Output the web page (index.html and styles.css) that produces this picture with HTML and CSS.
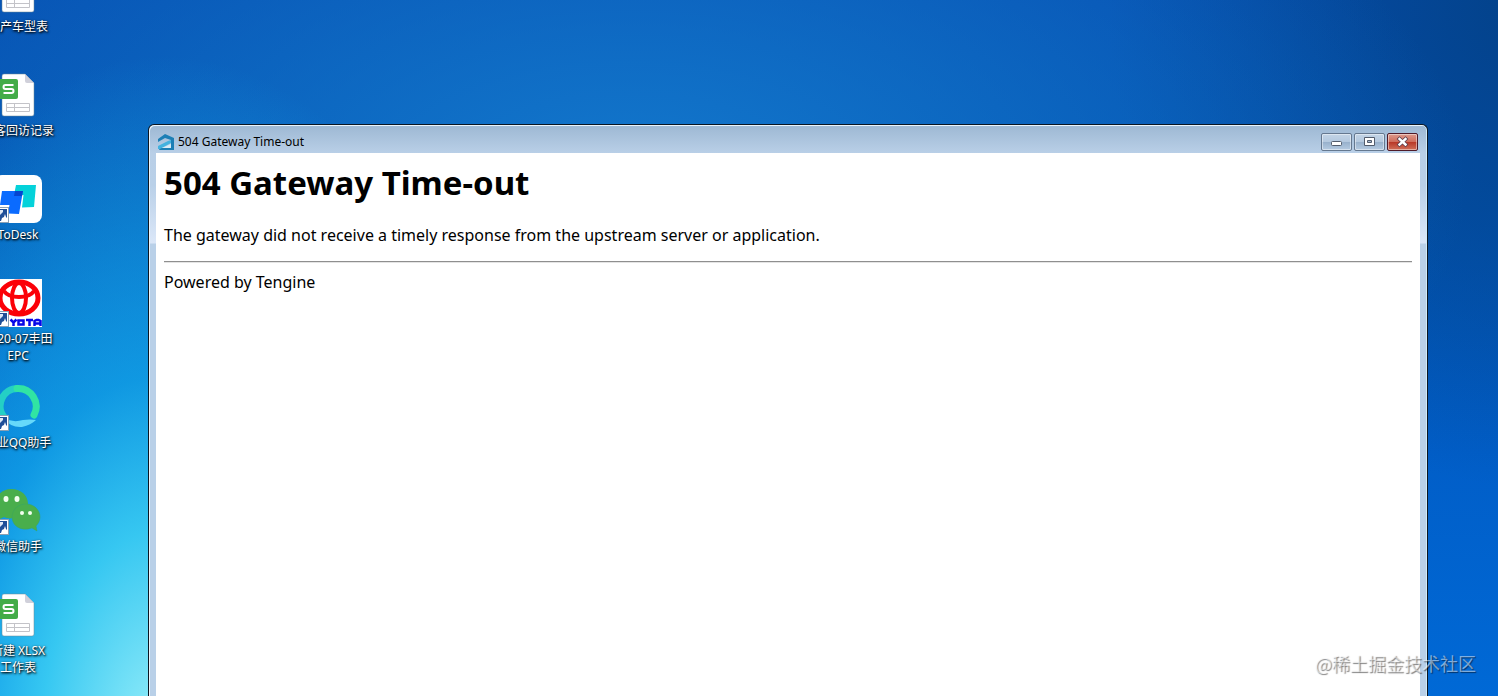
FILE: index.html
```html
<!DOCTYPE html>
<html lang="zh-CN">
<head>
    <meta charset="UTF-8">
    <meta name="viewport" content="width=device-width, initial-scale=1.0">
    <title>504 Gateway Time-out</title>
    <link rel="stylesheet" href="styles.css">
</head>
<body>
    <!-- shared icon shapes -->
    <svg class="defs" width="0" height="0" aria-hidden="true">
        <symbol id="sheet" viewBox="0 0 48 48">
            <path d="M10 3h21l9 9v31a2 2 0 0 1-2 2H10a2 2 0 0 1-2-2V5a2 2 0 0 1 2-2z" fill="#fff" stroke="#6b8796" stroke-opacity=".5" stroke-width="1"/>
            <path d="M31 3l9 9h-7a2 2 0 0 1-2-2z" fill="#d0d0da"/>
            <path d="M12.500 32.500h23v8h-23zM12.500 36.500h23M20.500 32.500v8" fill="none" stroke="#c3c3c8"/>
            <rect x="4" y="8" width="20" height="20" rx="2" fill="#43ac48"/>
            <path d="M19.500 14h-8q-2 0-2 2t2 2h6q2 0 2 2t-2 2h-8" fill="none" stroke="#fff" stroke-width="2"/>
        </symbol>
        <symbol id="shortcut" viewBox="0 0 48 48">
            <rect x=".5" y="32.500" width="14" height="15" fill="#fff" stroke="#8aa0b4"/>
            <rect x="2" y="34" width="11" height="12" fill="#1f4f98"/>
            <path d="M5 35h4v2l-3 3z" fill="#dfe9f5"/>
            <path d="M7 46l1-3 2-1 1-3 1 3 1 1v3z" fill="#fff"/>
        </symbol>
    </svg>

    <div class="desktop">
        <nav class="icons">
            <a href="#" class="icon">
                <svg viewBox="0 0 48 48"><use href="#sheet"/></svg>
                <span>国产车型表</span>
            </a>
            <a href="#" class="icon">
                <svg viewBox="0 0 48 48"><use href="#sheet"/></svg>
                <span>顾客回访记录</span>
            </a>
            <a href="#" class="icon">
                <svg viewBox="0 0 48 48">
                    <rect width="48" height="48" rx="8" fill="#fff"/>
                    <path d="M22 10h20l-2 22-12 .5 1.500-12.500H20z" fill="#04d2da"/>
                    <path d="M8 16h21l-4 23-11-.5 1.500-8.500H6z" fill="#0a6bff"/>
                    <path d="M21 16h8l-1 5h-8z" fill="#0645cf"/>
                    <use href="#shortcut"/>
                </svg>
                <span>ToDesk</span>
            </a>
            <a href="#" class="icon">
                <svg viewBox="0 0 48 48">
                    <rect width="48" height="48" fill="#fff"/>
                    <g fill="none" stroke="#fb0007" stroke-width="5">
                        <ellipse cx="25" cy="19" rx="19" ry="16"/>
                        <ellipse cx="25" cy="19" rx="7" ry="15" stroke-width="4"/>
                        <path d="M10 12c5 8 25 8 30 0" stroke-width="4"/>
                    </g>
                    <path d="M16.500 40.500l3 3 3-3M19.500 43v4M24.500 41.500h5v4h-5zM32 41h7M35.500 41v6M40.500 47v-5l2-1h2l2 1v5M40.500 44.500h6" fill="none" stroke="#0707e8" stroke-width="2.500"/>
                    <use href="#shortcut"/>
                </svg>
                <span>2020-07丰田<br>EPC</span>
            </a>
            <a href="#" class="icon">
                <svg viewBox="0 0 48 48">
                    <path d="M9 35q10 5 20 2 7-1 13 0-5 5-14 7-11 1-19-9z" fill="#66d9fa"/>
                    <path d="M11 35A17.500 17.500 0 0 1 24 5.500" fill="none" stroke="#24cfc5" stroke-width="7"/>
                    <path d="M23 5.500A18 18 0 0 1 40 32" fill="none" stroke="#31e4a3" stroke-width="7" stroke-linecap="round"/>
                    <use href="#shortcut"/>
                </svg>
                <span>企业QQ助手</span>
            </a>
            <a href="#" class="icon">
                <svg viewBox="0 0 48 48">
                    <path d="M17 2c11 0 17 7 17 15-10 0-16 6-15 14-3 1-7 0-9-1l-6 3 1-6C-5 17 4 2 17 2z" fill="#49ae4c"/>
                    <path d="M32 17c8 0 14 6 14 13 0 4-2 7-4 9l1 5-5-3c-12 4-20-3-20-11 0-7 6-13 14-13z" fill="#49ae4c" stroke="#3aa55f" stroke-width=".5"/>
                    <g fill="#f2fff0"><ellipse cx="12" cy="12" rx="2.500" ry="3"/><ellipse cx="23" cy="12" rx="2.500" ry="3"/><circle cx="28" cy="26" r="2"/><circle cx="36" cy="26" r="2"/></g>
                    <use href="#shortcut"/>
                </svg>
                <span>微信助手</span>
            </a>
            <a href="#" class="icon">
                <svg viewBox="0 0 48 48"><use href="#sheet"/></svg>
                <span>新建 XLSX<br>工作表</span>
            </a>
        </nav>

        <div class="window">
            <header class="titlebar">
                <svg class="app-icon" viewBox="0 0 18 18">
                    <path d="M1 6l7-5 9 4v12H2l1-2h11V7L8 5 1 9z" fill="#1d7fb5"/>
                    <path d="M1 13l10-5 3-1v3L3 16H1z" fill="#43b2df"/>
                    <path d="M5 15l9-4v4z" fill="#d8ecf7"/>
                </svg>
                <span class="title">504 Gateway Time-out</span>
                <button class="win-btn" type="button" aria-label="Minimize">
                    <svg viewBox="0 0 29 15"><rect x="9.500" y="7.500" width="10" height="4" rx="1" fill="#fff" stroke="#525c6c"/></svg>
                </button>
                <button class="win-btn" type="button" aria-label="Maximize">
                    <svg viewBox="0 0 29 15"><path d="M9.500 3.500h10v8h-10z" fill="#fff" stroke="#525c6c"/><path d="M12.500 6.500h4v2h-4z" fill="#a9bdd4" stroke="#525c6c"/></svg>
                </button>
                <button class="win-btn close" type="button" aria-label="Close">
                    <svg viewBox="0 0 29 15"><path d="M11.500 5l6 5.500M17.500 5l-6 5.500" stroke="#5c3e4c" stroke-width="4" stroke-linecap="square"/><path d="M11.500 5l6 5.500M17.500 5l-6 5.500" stroke="#fff" stroke-width="2.400" stroke-linecap="square"/></svg>
                </button>
            </header>
            <main class="page">
                <h1>504 Gateway Time-out</h1>
                <p>The gateway did not receive a timely response from the upstream server or application.</p>
                <hr>
                <div>Powered by Tengine</div>
            </main>
        </div>

        <div class="watermark">@稀土掘金技术社区</div>
    </div>
</body>
</html>
```

FILE: styles.css
```css
* {
    box-sizing: border-box;
}

body {
    margin: 0;
    font-family: "Noto Sans", "Noto Sans CJK SC", sans-serif;
    color: #000;
}

.defs {
    position: absolute;
}

.desktop {
    position: relative;
    display: flex;
    height: 100vh;
    overflow: hidden;
    background:
        radial-gradient(ellipse 26% 100% at 11% 108%, #a0f2fa 0%, rgba(60, 210, 245, 0.9) 32%, rgba(20, 175, 238, 0.7) 54%, rgba(10, 140, 225, 0) 100%),
        radial-gradient(ellipse 56% 60% at 42% 26%, rgba(20, 122, 206, 0.95) 0%, rgba(12, 104, 190, 0) 100%),
        radial-gradient(ellipse 28% 70% at 102% 0%, #03428a 0%, rgba(2, 70, 150, 0) 100%),
        linear-gradient(to bottom, #0650b2 0%, #0254b2 30%, #015ec8 65%, #0069d6 100%);
}

/* desktop shortcuts, the column runs off the left and top edges */
.icons {
    width: 76px;
    margin: -33px 0 0 -20px;
    flex-shrink: 0;
}

.icon {
    display: flex;
    flex-direction: column;
    align-items: center;
    gap: 3px;
    height: 104px;
    color: #fff;
    font-size: 12px;
    line-height: 17px;
    text-align: center;
    text-decoration: none;
    white-space: nowrap;
    text-shadow: 1px 1px 2px #000, 0 1px 3px rgba(0, 0, 0, 0.8);
}

.icon svg {
    width: 48px;
    height: 48px;
    flex-shrink: 0;
}

/* window */
.window {
    flex: 1;
    display: flex;
    flex-direction: column;
    margin: 124px 70px 0 92px;
    padding: 0 7px;
    border: 1px solid #0b1622;
    border-bottom: 0;
    border-radius: 6px 6px 0 0;
    background:
        linear-gradient(to bottom, #9db8d3 0, #b9cfe7 28px, #b9d0e8 60px, #dbe7f8 118px, #b9d0e8 119px, #b9d0e8 100%);
    box-shadow: inset 1px 1px 0 #eaf5fc, inset -1px 0 0 #cfeaf8;
}

.titlebar {
    display: flex;
    align-items: center;
    gap: 2px;
    height: 28px;
    padding: 5px 2px 0 1px;
}

.app-icon {
    width: 18px;
    height: 18px;
}

.title {
    flex: 1;
    padding-left: 1px;
    font-size: 12px;
    line-height: 16px;
}

.win-btn {
    width: 31px;
    height: 18px;
    padding: 0;
    border: 1px solid #65788f;
    border-radius: 2px;
    background: linear-gradient(to bottom, #c3d4e6 0%, #b4c9df 48%, #98b1cc 52%, #b5cbe2 100%);
    box-shadow: inset 0 0 0 1px rgba(255, 255, 255, 0.45);
}

.win-btn svg {
    display: block;
    width: 29px;
    height: 15px;
}

.win-btn.close {
    border-color: #4f1a28;
    background: linear-gradient(to bottom, #dd9a8c 0%, #cf6d5c 48%, #b93827 52%, #d0705a 100%);
}

.page {
    flex: 1;
    padding: 8px;
    background: #fff;
    font-size: 16px;
    line-height: 22px;
}

.page h1 {
    margin: 0 0 20px;
    font-size: 33px;
    line-height: 43px;
}

.page p {
    margin: 0;
}

.page hr {
    margin: 15px 0 8px;
    border: 0;
    border-top: 1px solid #8f8f8f;
    border-bottom: 1px solid #e4e4e4;
}

.watermark {
    position: absolute;
    right: 22px;
    bottom: 20px;
    color: rgba(255, 255, 255, 0.5);
    font-family: "Noto Sans CJK SC", sans-serif;
    font-size: 18px;
    line-height: 26px;
    text-shadow: 1px 1px 1px rgba(0, 0, 0, 0.5);
}
```
